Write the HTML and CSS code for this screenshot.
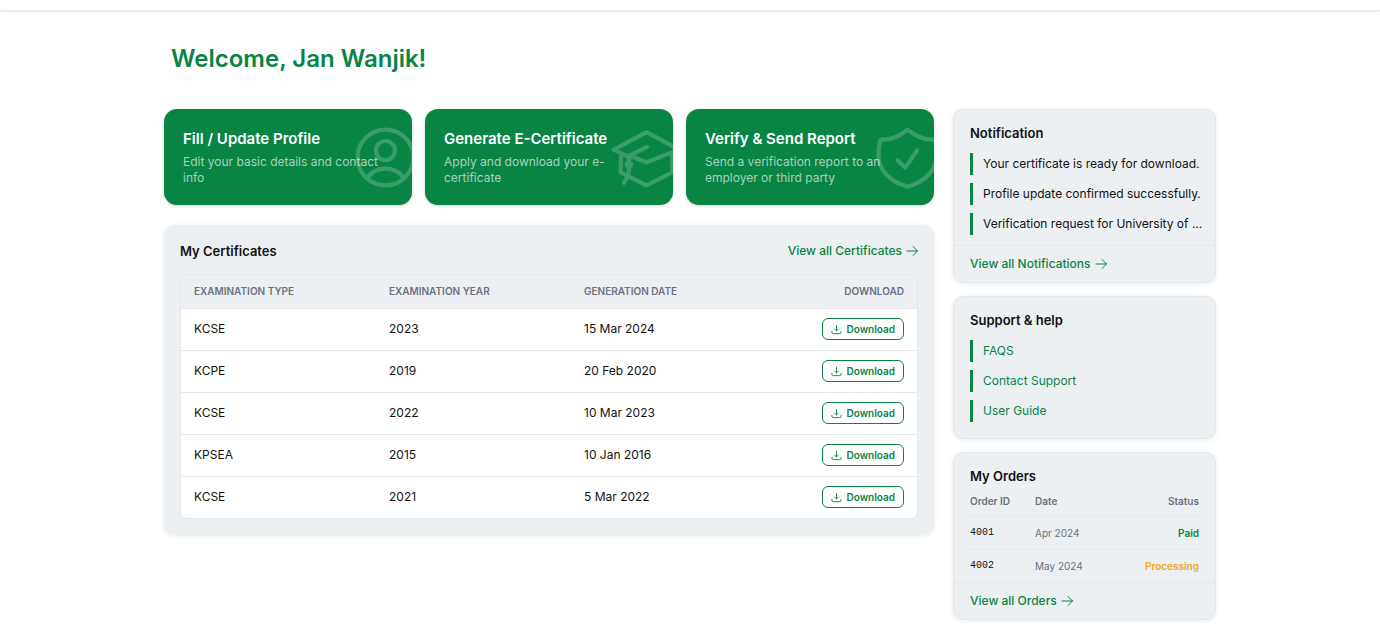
FILE: index.html
```html
<!DOCTYPE html>
<html lang="en">
<head>
    <meta charset="UTF-8">
    <meta name="viewport" content="width=device-width, initial-scale=1.0">
    <title>Dashboard</title>
    <link rel="stylesheet" href="styles.css">
</head>
<body>
    <svg class="sprite" aria-hidden="true">
        <symbol id="icon-arrow" viewBox="0 0 12 12">
            <path d="M1 6h10.5M7 1.5L11.5 6 7 10.5"/>
        </symbol>
        <symbol id="icon-download" viewBox="0 0 24 24">
            <path d="M12 15V3M8 11l4 4 4-4M2 16v2a3 3 0 0 0 3 3h14a3 3 0 0 0 3-3v-2"/>
        </symbol>
    </svg>

    <header class="topbar"></header>

    <div class="container">
        <h1>Welcome, Jan Wanjik!</h1>

        <div class="layout">
            <main class="main">
                <!-- Quick actions -->
                <div class="actions">
                    <a class="action" href="#">
                        <h2>Fill / Update Profile</h2>
                        <p>Edit your basic details and contact info</p>
                        <svg class="action-icon" viewBox="0 0 24 24" aria-hidden="true">
                            <circle cx="12" cy="12" r="10"/>
                            <circle cx="12" cy="9.5" r="3.4"/>
                            <path d="M5.5 19.2C7 17.2 9.3 16 12 16s5 1.2 6.5 3.2"/>
                        </svg>
                    </a>
                    <a class="action" href="#">
                        <h2>Generate E-Certificate</h2>
                        <p>Apply and download your e-certificate</p>
                        <svg class="action-icon" viewBox="0 0 24 24" aria-hidden="true">
                            <path d="M5.6 11.8L.3 9.2 12 2.9l11.7 6.3L12 13.7l-6.2-2.4"/>
                            <path d="M2.9 10.8l-.2 6.5L12 22l9.3-4.7-.2-6.5"/>
                            <path d="M12.2 8.2l-6.5 3.2v3.1"/>
                            <circle cx="5.7" cy="14.5" r=".8"/>
                            <path d="M5.7 15.5c.2 2-.6 4-1.8 5.6"/>
                        </svg>
                    </a>
                    <a class="action" href="#">
                        <h2>Verify &amp; Send Report</h2>
                        <p>Send a verification report to an employer or third party</p>
                        <svg class="action-icon" viewBox="0 0 24 24" aria-hidden="true">
                            <path d="M12 2C9.3 4.3 6.3 5.6 3 5.6c-.5 0-.8.3-.9.8-.4 1.6-.5 3-.5 4.6 0 5.5 4 9.6 10.4 11.5 6.4-1.9 10.4-6 10.4-11.5 0-1.6-.1-3-.5-4.6-.1-.5-.4-.8-.9-.8-3.3 0-6.3-1.3-9-3.6z"/>
                            <path d="M8.4 13l2.8 2.7 4.2-6.2"/>
                        </svg>
                    </a>
                </div>

                <!-- Certificates -->
                <section class="panel certificates">
                    <div class="panel-head">
                        <h3>My Certificates</h3>
                        <a class="more" href="#">View all Certificates <svg><use href="#icon-arrow"/></svg></a>
                    </div>
                    <div class="table-wrap">
                        <table class="cert-table">
                            <thead>
                                <tr><th>Examination Type</th><th>Examination Year</th><th>Generation Date</th><th>Download</th></tr>
                            </thead>
                            <tbody>
                                <tr>
                                    <td>KCSE</td><td>2023</td><td>15 Mar 2024</td>
                                    <td><button type="button"><svg><use href="#icon-download"/></svg>Download</button></td>
                                </tr>
                                <tr>
                                    <td>KCPE</td><td>2019</td><td>20 Feb 2020</td>
                                    <td><button type="button"><svg><use href="#icon-download"/></svg>Download</button></td>
                                </tr>
                                <tr>
                                    <td>KCSE</td><td>2022</td><td>10 Mar 2023</td>
                                    <td><button type="button"><svg><use href="#icon-download"/></svg>Download</button></td>
                                </tr>
                                <tr>
                                    <td>KPSEA</td><td>2015</td><td>10 Jan 2016</td>
                                    <td><button type="button"><svg><use href="#icon-download"/></svg>Download</button></td>
                                </tr>
                                <tr>
                                    <td>KCSE</td><td>2021</td><td>5 Mar 2022</td>
                                    <td><button type="button"><svg><use href="#icon-download"/></svg>Download</button></td>
                                </tr>
                            </tbody>
                        </table>
                    </div>
                </section>
            </main>

            <aside class="sidebar">
                <section class="panel card">
                    <h3>Notification</h3>
                    <ul class="items">
                        <li>Your certificate is ready for download.</li>
                        <li>Profile update confirmed successfully.</li>
                        <li>Verification request for University of ...</li>
                    </ul>
                    <div class="card-foot">
                        <a class="more" href="#">View all Notifications <svg><use href="#icon-arrow"/></svg></a>
                    </div>
                </section>

                <section class="panel card support">
                    <h3>Support &amp; help</h3>
                    <ul class="items">
                        <li><a href="#">FAQS</a></li>
                        <li><a href="#">Contact Support</a></li>
                        <li><a href="#">User Guide</a></li>
                    </ul>
                </section>

                <section class="panel card">
                    <h3>My Orders</h3>
                    <table class="order-table">
                        <thead>
                            <tr><th>Order ID</th><th>Date</th><th>Status</th></tr>
                        </thead>
                        <tbody>
                            <tr><td>4001</td><td>Apr 2024</td><td class="paid">Paid</td></tr>
                            <tr><td>4002</td><td>May 2024</td><td class="processing">Processing</td></tr>
                        </tbody>
                    </table>
                    <div class="card-foot">
                        <a class="more" href="#">View all Orders <svg><use href="#icon-arrow"/></svg></a>
                    </div>
                </section>
            </aside>
        </div>
    </div>
</body>
</html>
```
FILE: styles.css
```css
* {
    box-sizing: border-box;
}

body {
    margin: 0;
    font-family: Inter, "Liberation Sans", sans-serif;
    font-size: 12px;
    line-height: 16px;
    color: #111;
    background-color: #fff;
}

h1, h2, h3, p, ul {
    margin: 0;
}

a {
    color: #088445;
    text-decoration: none;
}

svg {
    fill: none;
    stroke: currentColor;
    stroke-linecap: round;
    stroke-linejoin: round;
}

.sprite {
    display: none;
}

.topbar {
    height: 11px;
    border-bottom: 1px solid #e5e7eb;
    box-shadow: 0 1px 2px rgba(0, 0, 0, 0.08);
}

.container {
    max-width: 1084px;
    margin: 0 auto;
    padding: 32px 16px 20px;
}

h1 {
    padding: 0 7px;
    margin-bottom: 34px;
    font-size: 24px;
    line-height: 32px;
    font-weight: 600;
    color: #088445;
}

h3 {
    font-size: 13px;
    line-height: 20px;
    font-weight: 600;
}

.layout {
    display: grid;
    grid-template-columns: minmax(0, 1fr) 263px;
    gap: 19px;
    align-items: start;
}

/* Quick actions */
.actions {
    display: grid;
    grid-template-columns: repeat(3, 1fr);
    gap: 13px;
    margin-bottom: 20px;
}

.action {
    position: relative;
    overflow: hidden;
    padding: 20px 19px 19px;
    border-radius: 13px;
    background-color: #088445;
    color: #fff;
    box-shadow: 0 1px 3px rgba(0, 0, 0, 0.2);
}

.action h2 {
    margin-bottom: 5px;
    font-size: 15px;
    line-height: 20px;
    font-weight: 600;
}

.action p {
    max-width: 204px;
    color: rgba(255, 255, 255, 0.65);
}

.action-icon {
    position: absolute;
    top: 15px;
    right: -7px;
    width: 67px;
    height: 67px;
    overflow: visible;
    stroke-width: 1.5;
    opacity: 0.2;
}

.panel {
    border-radius: 10px;
    background-color: #ecf0f3;
    box-shadow: 0 1px 5px rgba(8, 80, 69, 0.1);
}

.more {
    display: inline-flex;
    align-items: center;
    gap: 4px;
    font-weight: 500;
}

.more svg {
    width: 12px;
    height: 12px;
}

/* Certificates */
.certificates {
    padding: 16px;
}

.panel-head {
    display: flex;
    justify-content: space-between;
    align-items: center;
    margin-bottom: 13px;
}

.table-wrap {
    overflow: hidden;
    border: 1px solid #e5e7eb;
    border-radius: 7px;
    background-color: #fff;
}

table {
    width: 100%;
    border-collapse: collapse;
    table-layout: fixed;
}

th {
    padding: 0;
    text-align: left;
    font-weight: 600;
    color: #6b7280;
}

td {
    padding: 0;
}

th:last-child,
td:last-child {
    text-align: right;
}

.cert-table th,
.cert-table td {
    padding: 0 13px;
}

.cert-table th {
    width: 195px;
    height: 33px;
    background-color: #ecf0f3;
    font-size: 10px;
    text-transform: uppercase;
}

.cert-table th:last-child {
    width: auto;
}

.cert-table td {
    height: 42px;
    border-top: 1px solid #e5e7eb;
}

.cert-table button {
    display: inline-flex;
    align-items: center;
    gap: 5px;
    padding: 2px 8px;
    border: 1px solid #088445;
    border-radius: 6px;
    background-color: #fff;
    color: #088445;
    font-family: inherit;
    font-size: 10px;
    line-height: 16px;
    font-weight: 600;
    cursor: pointer;
}

.cert-table button svg {
    width: 11px;
    height: 11px;
    stroke-width: 2;
}

/* Sidebar */
.sidebar {
    display: grid;
    grid-template-columns: minmax(0, 1fr);
    gap: 13px;
}

.card {
    padding: 13px 16px 0;
    border: 1px solid #e3e8ee;
}

.items {
    display: grid;
    gap: 8px;
    padding: 10px 0;
    list-style: none;
}

.items li {
    padding: 3px 0 3px 10px;
    border-left: 3px solid #088445;
    white-space: nowrap;
}

.support {
    padding-bottom: 6px;
}

.card-foot {
    display: flex;
    margin: 0 -16px;
    padding: 10px 16px;
    border-top: 1px solid #e3e8ee;
}

.order-table {
    font-size: 10px;
}

.order-table th {
    width: 65px;
    height: 30px;
}

.order-table th:last-child {
    width: auto;
}

.order-table td {
    height: 33px;
    border-top: 1px solid #e3e8ee;
    color: #6b7280;
}

.order-table td:first-child {
    font-family: "Liberation Mono", monospace;
    color: #111;
}

.order-table td.paid {
    font-weight: 600;
    color: #088445;
}

.order-table td.processing {
    font-weight: 600;
    color: #f5a623;
}
```
